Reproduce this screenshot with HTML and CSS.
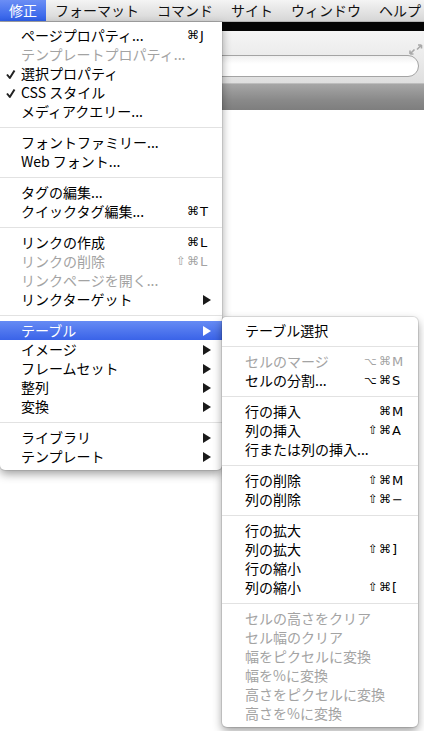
FILE: index.html
```html
<!DOCTYPE html>
<html lang="ja">
<head>
<meta charset="utf-8">
<title>修正メニュー</title>
<link rel="stylesheet" href="styles.css">
</head>
<body>
<div class="screen">
  <div class="menubar">
    <span class="mb-item active">修正</span>
    <span class="mb-item">フォーマット</span>
    <span class="mb-item">コマンド</span>
    <span class="mb-item">サイト</span>
    <span class="mb-item">ウィンドウ</span>
    <span class="mb-item">ヘルプ</span>
  </div>

  <div class="window">
    <div class="titleband"></div>
    <div class="toolbar">
      <svg class="resize" width="15" height="11" viewBox="0 0 15 11">
        <path d="M2 10 L6.5 5.5 M2 10 L2 6.5 M2 10 L5.5 10" fill="none" stroke="#a9a9a9" stroke-width="1.6"/>
        <path d="M13.5 1 L9 5.5 M13.5 1 L10 1 M13.5 1 L13.5 4.5" fill="none" stroke="#a9a9a9" stroke-width="1.6"/>
      </svg>
      <div class="search"></div>
    </div>
    <div class="darkbar"></div>
    <div class="content"></div>
  </div>

  <div class="menu main">
    <div class="item"><span class="gutter"></span><span class="label">ページプロパティ...</span><span class="sc"><span class="mod">⌘</span><span class="key">J</span></span></div>
    <div class="item dis"><span class="gutter"></span><span class="label">テンプレートプロパティ...</span></div>
    <div class="item"><span class="gutter"><svg width="21" height="19" viewBox="0 0 21 19"><path d="M7 10.5 L9.8 14 L14.5 6.5" fill="none" stroke="#222" stroke-width="2" stroke-linejoin="round"/></svg></span><span class="label">選択プロパティ</span></div>
    <div class="item"><span class="gutter"><svg width="21" height="19" viewBox="0 0 21 19"><path d="M7 10.5 L9.8 14 L14.5 6.5" fill="none" stroke="#222" stroke-width="2" stroke-linejoin="round"/></svg></span><span class="label">CSS スタイル</span></div>
    <div class="item"><span class="gutter"></span><span class="label">メディアクエリー...</span></div>
    <div class="sep"></div>
    <div class="item"><span class="gutter"></span><span class="label">フォントファミリー...</span></div>
    <div class="item"><span class="gutter"></span><span class="label">Web フォント...</span></div>
    <div class="sep"></div>
    <div class="item"><span class="gutter"></span><span class="label">タグの編集...</span></div>
    <div class="item"><span class="gutter"></span><span class="label">クイックタグ編集...</span><span class="sc"><span class="mod">⌘</span><span class="key">T</span></span></div>
    <div class="sep"></div>
    <div class="item"><span class="gutter"></span><span class="label">リンクの作成</span><span class="sc"><span class="mod">⌘</span><span class="key">L</span></span></div>
    <div class="item dis"><span class="gutter"></span><span class="label">リンクの削除</span><span class="sc"><span class="mod">⇧</span><span class="mod">⌘</span><span class="key">L</span></span></div>
    <div class="item dis"><span class="gutter"></span><span class="label">リンクページを開く...</span></div>
    <div class="item"><span class="gutter"></span><span class="label">リンクターゲット</span><svg class="arrow" width="8" height="10" viewBox="0 0 8 10"><polygon points="0,0 8,5 0,10" fill="#1a1a1a"/></svg></div>
    <div class="sep"></div>
    <div class="item hl"><span class="gutter"></span><span class="label">テーブル</span><svg class="arrow" width="8" height="10" viewBox="0 0 8 10"><polygon points="0,0 8,5 0,10" fill="#fff"/></svg></div>
    <div class="item"><span class="gutter"></span><span class="label">イメージ</span><svg class="arrow" width="8" height="10" viewBox="0 0 8 10"><polygon points="0,0 8,5 0,10" fill="#1a1a1a"/></svg></div>
    <div class="item"><span class="gutter"></span><span class="label">フレームセット</span><svg class="arrow" width="8" height="10" viewBox="0 0 8 10"><polygon points="0,0 8,5 0,10" fill="#1a1a1a"/></svg></div>
    <div class="item"><span class="gutter"></span><span class="label">整列</span><svg class="arrow" width="8" height="10" viewBox="0 0 8 10"><polygon points="0,0 8,5 0,10" fill="#1a1a1a"/></svg></div>
    <div class="item"><span class="gutter"></span><span class="label">変換</span><svg class="arrow" width="8" height="10" viewBox="0 0 8 10"><polygon points="0,0 8,5 0,10" fill="#1a1a1a"/></svg></div>
    <div class="sep"></div>
    <div class="item"><span class="gutter"></span><span class="label">ライブラリ</span><svg class="arrow" width="8" height="10" viewBox="0 0 8 10"><polygon points="0,0 8,5 0,10" fill="#1a1a1a"/></svg></div>
    <div class="item"><span class="gutter"></span><span class="label">テンプレート</span><svg class="arrow" width="8" height="10" viewBox="0 0 8 10"><polygon points="0,0 8,5 0,10" fill="#1a1a1a"/></svg></div>
  </div>

  <div class="menu sub">
    <div class="item"><span class="gutter"></span><span class="label">テーブル選択</span></div>
    <div class="sep"></div>
    <div class="item dis"><span class="gutter"></span><span class="label">セルのマージ</span><span class="sc"><span class="mod opt">⌥</span><span class="mod">⌘</span><span class="key">M</span></span></div>
    <div class="item"><span class="gutter"></span><span class="label">セルの分割...</span><span class="sc"><span class="mod opt">⌥</span><span class="mod">⌘</span><span class="key">S</span></span></div>
    <div class="sep"></div>
    <div class="item"><span class="gutter"></span><span class="label">行の挿入</span><span class="sc"><span class="mod">⌘</span><span class="key">M</span></span></div>
    <div class="item"><span class="gutter"></span><span class="label">列の挿入</span><span class="sc"><span class="mod">⇧</span><span class="mod">⌘</span><span class="key">A</span></span></div>
    <div class="item"><span class="gutter"></span><span class="label">行または列の挿入...</span></div>
    <div class="sep"></div>
    <div class="item"><span class="gutter"></span><span class="label">行の削除</span><span class="sc"><span class="mod">⇧</span><span class="mod">⌘</span><span class="key">M</span></span></div>
    <div class="item"><span class="gutter"></span><span class="label">列の削除</span><span class="sc"><span class="mod">⇧</span><span class="mod">⌘</span><span class="key">−</span></span></div>
    <div class="sep"></div>
    <div class="item"><span class="gutter"></span><span class="label">行の拡大</span></div>
    <div class="item"><span class="gutter"></span><span class="label">列の拡大</span><span class="sc"><span class="mod">⇧</span><span class="mod">⌘</span><span class="key">]</span></span></div>
    <div class="item"><span class="gutter"></span><span class="label">行の縮小</span></div>
    <div class="item"><span class="gutter"></span><span class="label">列の縮小</span><span class="sc"><span class="mod">⇧</span><span class="mod">⌘</span><span class="key">[</span></span></div>
    <div class="sep"></div>
    <div class="item dis"><span class="gutter"></span><span class="label">セルの高さをクリア</span></div>
    <div class="item dis"><span class="gutter"></span><span class="label">セル幅のクリア</span></div>
    <div class="item dis"><span class="gutter"></span><span class="label">幅をピクセルに変換</span></div>
    <div class="item dis"><span class="gutter"></span><span class="label">幅を%に変換</span></div>
    <div class="item dis"><span class="gutter"></span><span class="label">高さをピクセルに変換</span></div>
    <div class="item dis"><span class="gutter"></span><span class="label">高さを%に変換</span></div>
  </div>
</div>
</body>
</html>
```

FILE: styles.css
```css
html, body {
  margin: 0;
  padding: 0;
  background: #ffffff;
}

.screen {
  position: relative;
  width: 424px;
  height: 731px;
  overflow: hidden;
  font-family: "Noto Sans CJK JP", sans-serif;
  font-size: 14px;
  color: #000;
}

/* ---------- menu bar ---------- */
.menubar {
  display: flex;
  height: 22px;
  background: linear-gradient(#f4f4f4, #d6d6d6);
  box-sizing: border-box;
  border-bottom: 1px solid #b4b4b4;
}

.mb-item {
  padding: 0 9px;
  line-height: 21px;
  height: 21px;
  white-space: nowrap;
  color: #111;
}

.mb-item.active {
  color: #fff;
  background: linear-gradient(#6b8ef5, #2f5fe8);
}

/* ---------- background window ---------- */
.window {
  display: flex;
  flex-direction: column;
}

.titleband {
  height: 9px;
  background: #050505;
}

.toolbar {
  height: 52px;
  box-sizing: border-box;
  padding: 13px 5px 6px 0;
  display: flex;
  flex-direction: column;
  align-items: flex-end;
  background: linear-gradient(#f5f5f5, #e9e9e9 60%, #dedede);
}

.resize {
  display: block;
  margin-right: -4px;
}

.search {
  width: 300px;
  height: 22px;
  box-sizing: border-box;
  border: 1px solid #a4a4a4;
  border-radius: 11px;
  background: linear-gradient(#f0f0f0, #ffffff 40%);
}

.darkbar {
  height: 27px;
  background: linear-gradient(#a6a6a6, #8a8a8a 60%, #7e7e7e);
  border-top: 1px solid #bdbdbd;
  box-sizing: border-box;
}

.content {
  flex: 1;
  background: #fff;
}

/* ---------- menus ---------- */
.menu {
  position: absolute;
  background: #ffffff;
  padding: 4px 0;
  box-sizing: border-box;
}

.menu.main {
  top: 22px;
  left: 0;
  width: 222px;
  border-radius: 0 0 5px 5px;
  box-shadow: 0 4px 10px rgba(0, 0, 0, 0.38), 0 0 0 1px rgba(0, 0, 0, 0.08);
}

.menu.sub {
  top: 317px;
  left: 222px;
  width: 196px;
  border-radius: 4px 5px 5px 5px;
  box-shadow: 0 4px 10px rgba(0, 0, 0, 0.38), 0 0 0 1px rgba(0, 0, 0, 0.1);
}

.item {
  display: flex;
  align-items: center;
  height: 19px;
  line-height: 19px;
  white-space: nowrap;
  padding-right: 10px;
}

.main .item .gutter {
  flex: none;
  width: 21px;
  height: 19px;
}

.sub .item .gutter {
  flex: none;
  width: 23px;
  height: 19px;
}

.gutter svg {
  display: block;
}

.item.dis {
  color: #a3a3a3;
}

.item.hl {
  color: #fff;
  background: linear-gradient(#668bf4, #3a63e8);
}

.sc {
  margin-left: auto;
  display: flex;
  font-family: "DejaVu Sans", "Noto Sans CJK JP", sans-serif;
  font-size: 12px;
}

.mod {
  width: 12px;
  text-align: center;
}

.mod.opt {
  width: 15px;
  font-size: 11px;
  text-align: left;
}

.key {
  width: 12px;
  text-align: left;
  padding-left: 1px;
  font-size: 13px;
}

.sub .item {
  padding-right: 11px;
}

.sub .key {
  width: 15px;
}

.arrow {
  margin-left: auto;
  margin-right: 1px;
  display: block;
}

.sep {
  height: 1px;
  margin: 6px 0 5px;
  background: #e2e2e2;
}
```
